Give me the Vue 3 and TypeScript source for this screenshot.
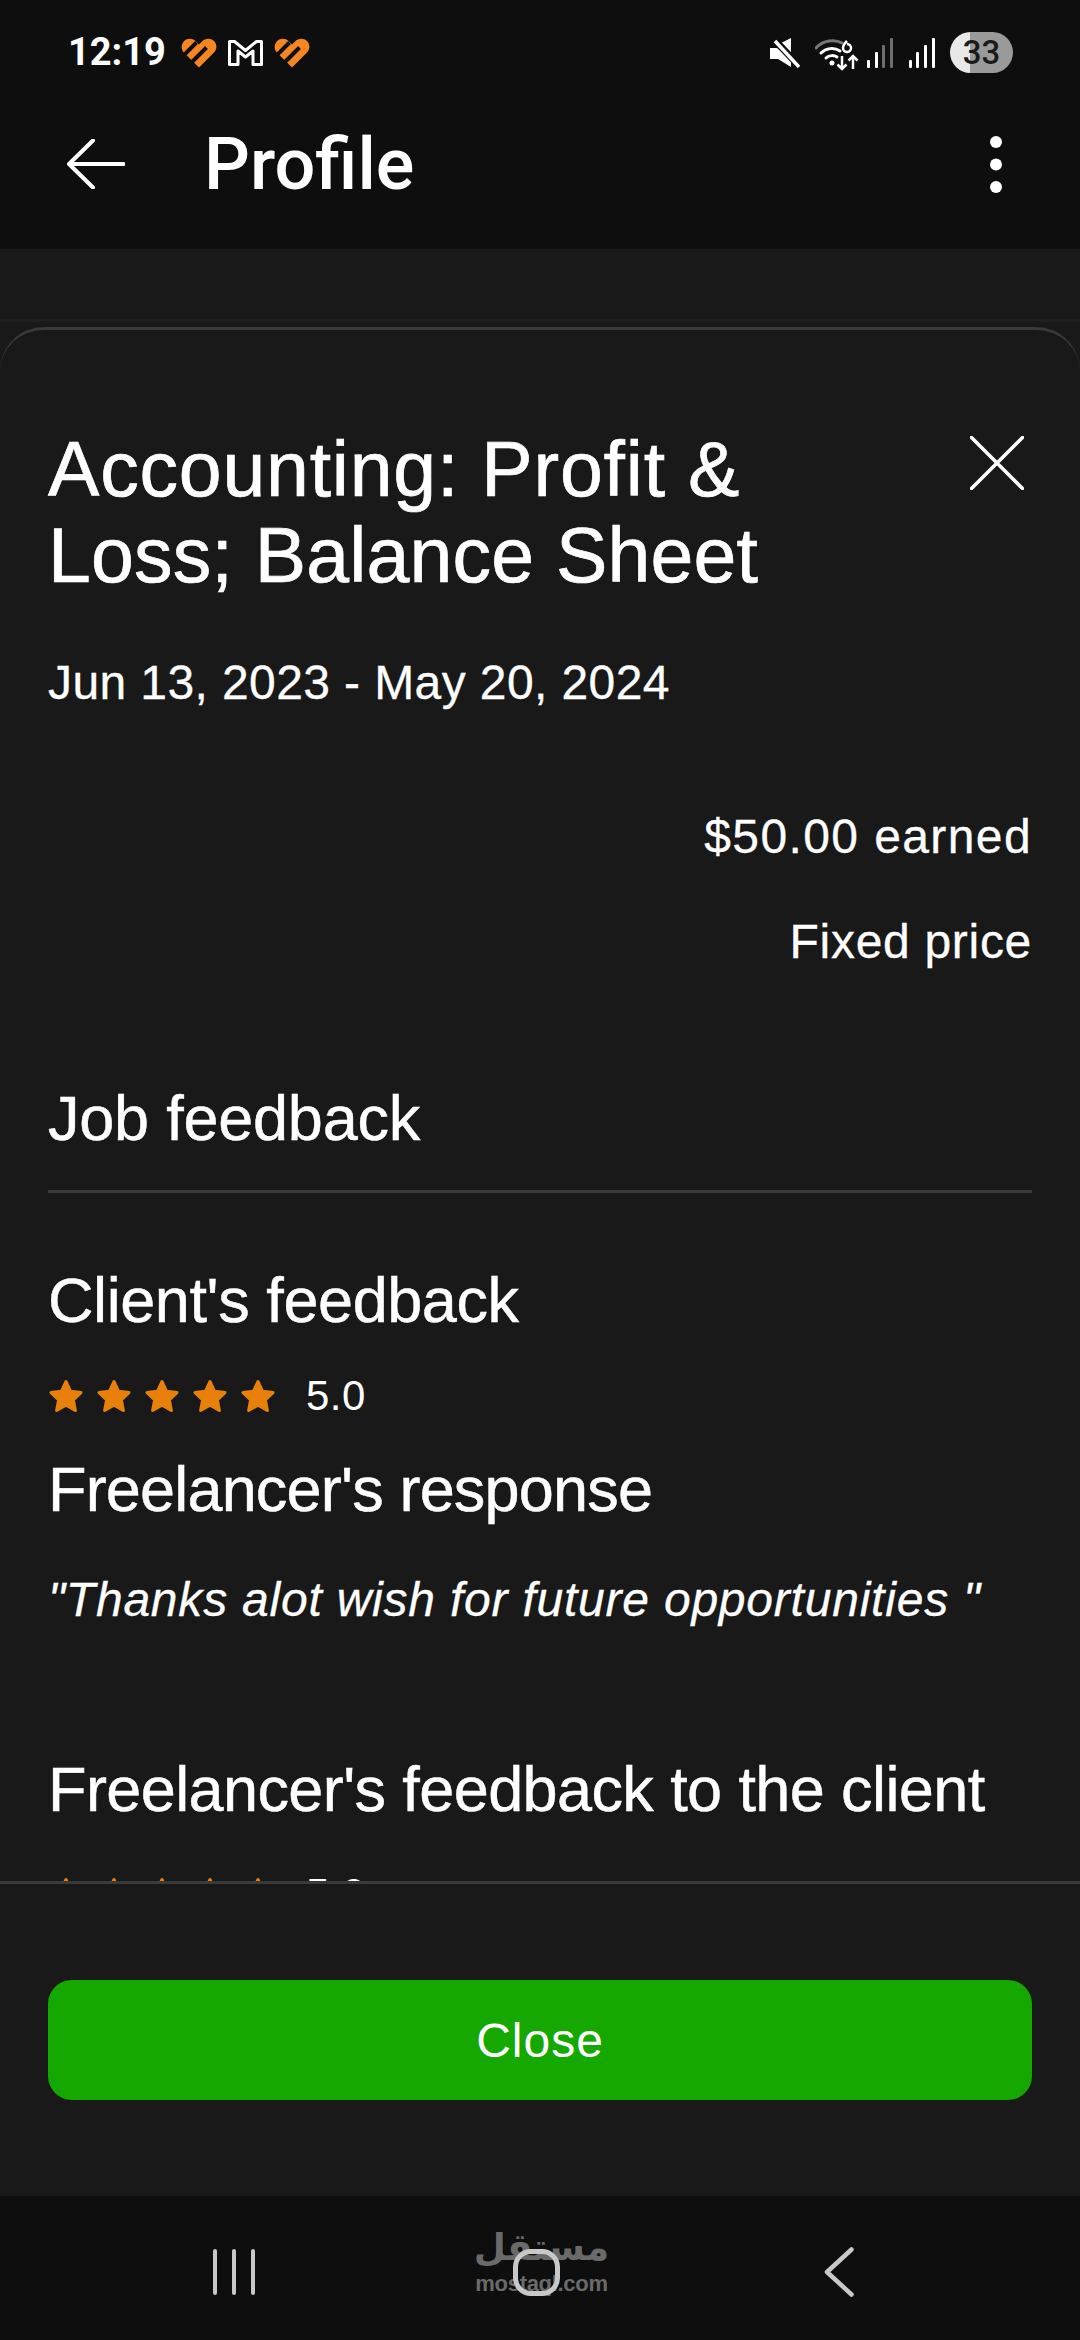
<template>
  <div class="page">
    <header class="top">
      <div class="status">
        <div class="status__left">
          <span class="time">12:19</span>
          <svg v-for="(icon, i) in leftIcons" :key="i" class="notif" :class="`notif--${icon}`" :viewBox="icon === 'heart' ? '0 0 36 30' : '0 0 37 28'">
            <template v-if="icon === 'heart'">
              <path d="M18 29.500 2.800 14.500C-.4 11.200.2 6 3 3.200 6.400-.2 11.500.2 14.500 3L18 6.400l3-3c3.200-3.200 8.600-3.700 12-.3 3.200 3.200 3.200 8.300 0 11.500Z" fill="#f6861f" />
              <path d="M15.500 4.500 1 19M25.500 9.500 10.500 24.500" stroke="#0e0e0e" stroke-width="4" fill="none" />
            </template>
            <path v-else d="M2.500 2.500h5l11 9 11-9h5v23h-8.500V12l-7.500 6-7.500-6v13.500H2.500Z" fill="none" stroke="#fff" stroke-width="3" stroke-linejoin="round" />
          </svg>
        </div>
        <div class="status__right">
          <svg class="mute" viewBox="0 0 30 30">
            <path d="M21 0v15L11 5Z M0 10h7L21 22v7L8 21H0Z" fill="#fff" />
            <path d="M3 0 29 28" stroke="#0e0e0e" stroke-width="7" />
            <path d="M5 3 29 29" stroke="#fff" stroke-width="3.500" />
          </svg>
          <svg class="wifi" viewBox="0 0 44 32">
            <path d="M1 9C8 1 20 0 27 4" fill="none" stroke="#777" stroke-width="3" stroke-linecap="round" />
            <path d="M6 14c5-5 13-6 19-2M11 19c3-3 8-3 11-1" fill="none" stroke="#fff" stroke-width="3" stroke-linecap="round" />
            <circle cx="17" cy="24" r="2.500" fill="#fff" />
            <path d="M32 2c-3 3-4 5-4 7a4 4 0 1 0 4-4" fill="none" stroke="#fff" stroke-width="2.500" />
            <path d="M27 17v13M22.500 25.500 27 30l4.500-4.500M38 30V17M33.500 21.500 38 17l4.500 4.500" fill="none" stroke="#fff" stroke-width="2.500" />
          </svg>
          <div class="signal">
            <i v-for="(h, i) in signalBars" :key="i" class="bar" :class="{ 'bar--dim': i > 1 }" :style="{ height: h + 'px' }"></i>
          </div>
          <div class="signal">
            <i v-for="(h, i) in signalBars" :key="i" class="bar" :style="{ height: h + 'px' }"></i>
          </div>
          <div class="battery">33</div>
        </div>
      </div>
      <div class="appbar">
        <svg class="back" viewBox="0 0 58 50">
          <path d="M56.500 25H2M26 1.500 2 25l24 23.500" fill="none" stroke="#fff" stroke-width="4" stroke-linecap="round" stroke-linejoin="round" />
        </svg>
        <h1 class="appbar__title">Profile</h1>
        <svg class="dots" viewBox="0 0 12 57">
          <circle cx="6" cy="6" r="6" /><circle cx="6" cy="28.500" r="6" /><circle cx="6" cy="51" r="6" />
        </svg>
      </div>
    </header>

    <div class="behind"></div>

    <section class="sheet">
      <div class="scroll">
        <svg class="close" viewBox="0 0 54 54">
          <path d="M1.500 1.500 52.500 52.500M52.500 1.500 1.500 52.500" stroke="#fff" stroke-width="3.500" stroke-linecap="round" />
        </svg>
        <h2 class="title"><span class="title__first">Accounting: Profit &amp;</span><br />Loss; Balance Sheet</h2>
        <p class="body date">Jun 13, 2023 - May 20, 2024</p>
        <p class="body earned">$50.00 earned</p>
        <p class="body price">Fixed price</p>
        <h3 class="heading job">Job feedback</h3>
        <div class="divider"></div>
        <h3 class="heading client">Client's feedback</h3>
        <div class="rating">
          <svg v-for="n in 5" :key="n" class="star" viewBox="0 0 36 35">
            <path :d="starPath" fill="#e8800c" stroke="#e8800c" stroke-width="3" stroke-linejoin="round" />
          </svg>
          <span class="rating__value">5.0</span>
        </div>
        <h3 class="heading response">Freelancer's response</h3>
        <p class="body quote">"Thanks alot wish for future opportunities "</p>
        <h3 class="heading to-client">Freelancer's feedback to the client</h3>
        <div class="rating rating--clipped">
          <svg v-for="n in 5" :key="n" class="star" viewBox="0 0 36 35">
            <path :d="starPath" fill="#e8800c" stroke="#e8800c" stroke-width="3" stroke-linejoin="round" />
          </svg>
          <span class="rating__value">5.0</span>
        </div>
      </div>
      <div class="footer">
        <button class="btn">Close</button>
      </div>
    </section>

    <nav class="navbar">
      <div class="recents"><i></i><i></i><i></i></div>
      <!-- site watermark sits under the home button -->
      <div class="watermark">
        <span class="watermark__ar">مستقل</span>
        <span class="watermark__en">mostaql.com</span>
      </div>
      <div class="home"></div>
      <svg class="chevron" viewBox="0 0 30 50">
        <path d="M27.500 2.500 3 25l24.500 22.500" fill="none" stroke="#c8c8c8" stroke-width="4.500" stroke-linecap="round" stroke-linejoin="round" />
      </svg>
    </nav>
  </div>
</template>

<script setup lang="ts">
const leftIcons = ['heart', 'm', 'heart']
const signalBars = [8, 16, 23, 30]

const starPath = 'M18 2.500 22.600 12.300 33 13.600 25.400 20.800 27.400 31.500 18 26.200 8.600 31.500 10.600 20.800 3 13.600 13.400 12.300Z'
</script>

<style>
body {
  margin: 0;
  background: #191919;
}
</style>

<style scoped>
.page {
  width: 1080px;
  height: 2340px;
  display: flex;
  flex-direction: column;
  overflow: hidden;
  position: relative;
  background: #191919;
  color: #fff;
  font-family: "Liberation Sans", Arial, sans-serif;
}

.top {
  height: 249px;
  flex: none;
  background: #0e0e0e;
}

.status {
  height: 90px;
  padding: 32px 67px 0 68px;
  box-sizing: border-box;
  display: flex;
  justify-content: space-between;
  align-items: flex-start;
}

.status__left {
  display: flex;
  align-items: center;
  height: 41px;
}

.time {
  font-family: Roboto, sans-serif;
  font-weight: 700;
  font-size: 38px;
  line-height: 41px;
  width: 113px;
}

.notif {
  display: block;
  flex: none;
}

.notif--heart {
  width: 36px;
  height: 30px;
}

.notif--m {
  width: 37px;
  height: 28px;
  margin: 0 10px 0 10px;
}

.status__right {
  display: flex;
  align-items: center;
  height: 41px;
}

.mute {
  width: 30px;
  height: 30px;
  margin-right: 15px;
}

.wifi {
  width: 44px;
  height: 32px;
  margin-right: 8px;
  margin-top: 4px;
}

.signal {
  display: flex;
  align-items: flex-end;
  gap: 4.700px;
  width: 28px;
  height: 30px;
  margin-right: 13.500px;
}

.bar {
  width: 3px;
  flex: none;
  background: #fff;
  border-radius: 1px;
}

.bar--dim {
  background: #6e6e6e;
}

.battery {
  width: 63px;
  height: 41px;
  border-radius: 21px;
  background: linear-gradient(90deg, #e8e8e8 0 20px, #9a9a9a 20px);
  color: #1a1a1a;
  font-family: Roboto, sans-serif;
  font-weight: 500;
  font-size: 33px;
  line-height: 41px;
  text-align: center;
}

.appbar {
  height: 148px;
  padding: 0 78px 0 67px;
  display: flex;
  align-items: center;
}

.back {
  width: 58px;
  height: 50px;
  flex: none;
}

.appbar__title {
  margin: 2px 0 0 79px;
  font-family: Roboto, sans-serif;
  font-weight: 500;
  font-size: 72px;
  line-height: 80px;
}

.dots {
  width: 12px;
  height: 57px;
  margin-left: auto;
  fill: #fff;
}

.behind {
  height: 70px;
  flex: none;
  border-bottom: 3px solid #1f1f1f;
}

.sheet {
  flex: 1;
  min-height: 0;
  margin-top: 5px;
  display: flex;
  flex-direction: column;
  border-top: 3px solid #3a3a3a;
  border-radius: 44px 44px 0 0;
  background: #191919;
}

.scroll {
  flex: 1;
  min-height: 0;
  overflow: hidden;
  padding: 96px 48px 0;
  position: relative;
}

.close {
  position: absolute;
  top: 106px;
  right: 56px;
  width: 54px;
  height: 54px;
}

.title {
  margin: 0;
  font-weight: 400;
  font-size: 77px;
  line-height: 86px;
  letter-spacing: 0.200px;
  -webkit-text-stroke: 0.700px #fff;
}

.title__first {
  letter-spacing: 0.800px;
}

.body {
  margin: 0;
  font-size: 48px;
  line-height: 60px;
  letter-spacing: 0.700px;
  -webkit-text-stroke: 0.300px #fff;
}

.date {
  margin-top: 55px;
  letter-spacing: 0.400px;
}

.earned {
  margin-top: 94px;
  text-align: right;
  letter-spacing: 1.400px;
}

.price {
  margin-top: 45px;
  text-align: right;
}

.heading {
  margin: 0;
  font-weight: 400;
  font-size: 63px;
  line-height: 70px;
  letter-spacing: -0.600px;
  -webkit-text-stroke: 0.500px #fff;
}

.job {
  margin-top: 111px;
  letter-spacing: -0.230px;
}

.divider {
  height: 3px;
  margin-top: 37px;
  background: #3a3a3a;
}

.client {
  margin-top: 72px;
  letter-spacing: -0.420px;
}

.rating {
  display: flex;
  align-items: center;
  height: 36px;
  margin-top: 43px;
  gap: 12px;
}

.rating--clipped {
  margin-top: 52px;
}

.star {
  width: 36px;
  height: 35px;
  flex: none;
}

.rating__value {
  margin-left: 18px;
  font-size: 42px;
  line-height: 36px;
  letter-spacing: 0.500px;
}

.response {
  margin-top: 40px;
  letter-spacing: -0.820px;
}

.quote {
  margin-top: 46px;
  font-style: italic;
  letter-spacing: 0.780px;
}

.to-client {
  margin-top: 124px;
}

.footer {
  flex: none;
  height: 315px;
  box-sizing: border-box;
  padding: 96px 48px 0;
  border-top: 3px solid #3a3a3a;
}

.btn {
  display: block;
  width: 100%;
  height: 120px;
  border: 0;
  border-radius: 24px;
  background: #14a800;
  color: #fff;
  font-family: inherit;
  font-size: 48px;
  letter-spacing: 1px;
}

.navbar {
  height: 144px;
  flex: none;
  background: #0e0e0e;
  position: relative;
}

.recents {
  position: absolute;
  left: 213px;
  top: 53px;
  display: flex;
  gap: 15px;
}

.recents i {
  width: 4px;
  height: 46px;
  border-radius: 2px;
  background: #c8c8c8;
}

.home {
  position: absolute;
  left: 513px;
  top: 53px;
  width: 47px;
  height: 47px;
  box-sizing: border-box;
  border: 5px solid #c8c8c8;
  border-radius: 18px;
}

.chevron {
  position: absolute;
  left: 824px;
  top: 51px;
  width: 30px;
  height: 50px;
}

.watermark {
  position: absolute;
  left: 476px;
  top: 26px;
  width: 131px;
  display: flex;
  flex-direction: column;
  align-items: center;
  color: #6a6a6a;
  font-weight: 700;
}

.watermark__ar {
  font-family: "DejaVu Sans", sans-serif;
  font-size: 37px;
  line-height: 52px;
  white-space: nowrap;
}

.watermark__en {
  font-size: 22px;
  line-height: 20px;
  letter-spacing: -0.300px;
  white-space: nowrap;
}
</style>
